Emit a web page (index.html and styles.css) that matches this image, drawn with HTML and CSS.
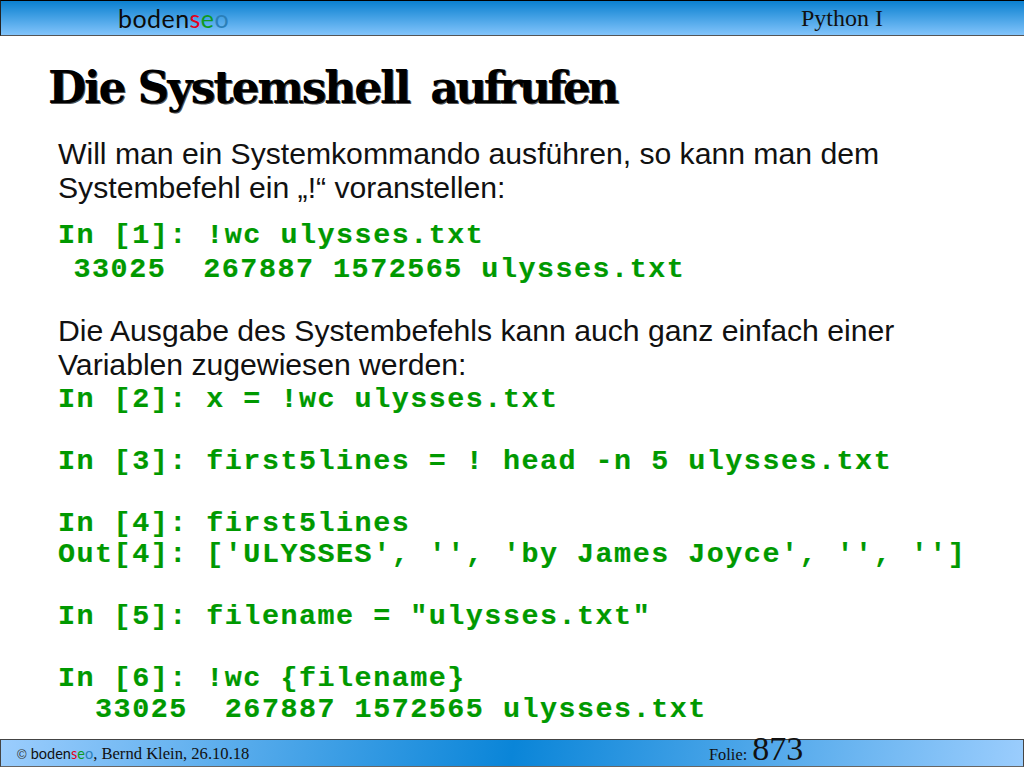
FILE: index.html
```html
<!DOCTYPE html>
<html lang="de">
<head>
<meta charset="utf-8">
<title>Die Systemshell aufrufen</title>
<link rel="stylesheet" href="styles.css">
</head>
<body>
<div class="slide">
  <header class="top">
    <div class="logo">boden<span class="r">s</span><span class="g">e</span><span class="b">o</span></div>
    <div class="course">Python I</div>
  </header>
  <main class="content">
    <h1 class="title">Die Systemshell <span class="last">aufrufen</span></h1>
    <p class="text first">Will man ein Systemkommando ausführen, so kann man dem<br>Systembefehl ein „!“ voranstellen:</p>
    <pre class="code one">In [1]: !wc ulysses.txt
<span class="nudge"> 33025  267887 1572565 ulysses.txt</span></pre>
    <p class="text second">Die Ausgabe des Systembefehls kann auch ganz einfach einer<br>Variablen zugewiesen werden:</p>
    <pre class="code two">In [2]: x = !wc ulysses.txt

In [3]: first5lines = ! head -n 5 ulysses.txt

In [4]: first5lines
Out[4]: ['ULYSSES', '', 'by James Joyce', '', '']

In [5]: filename = "ulysses.txt"

In [6]: !wc {filename}
  33025  267887 1572565 ulysses.txt</pre>
  </main>
  <footer class="bottom">
    <div class="credit"><span class="copy">©</span> <span class="mini">boden<span class="r">s</span><span class="g">e</span><span class="b">o</span></span>, Bernd Klein, 26.10.18</div>
    <div class="folio"><span class="folie">Folie:</span> <span class="num">873</span></div>
  </footer>
</div>
</body>
</html>
```
FILE: styles.css
```css
* { box-sizing: border-box; }
html, body { margin: 0; padding: 0; background: #fff; }
.slide { width: 1024px; height: 768px; display: flex; flex-direction: column; overflow: hidden; }
.top {
  height: 36px; flex: none; display: flex; align-items: center; justify-content: space-between;
  border-top: 1px solid #000; border-left: 1px solid #222; border-bottom: 1px solid #555;
  background: linear-gradient(180deg, #0a80d0 0%, #82c4fb 100%);
  padding: 0 141px 0 117px;
}
.logo { font: 400 25px/24px "Lato", sans-serif; color: #0b0b0b; letter-spacing: 0.45px; }
.r { color: #e3001b; }
.g { color: #0f9a1f; }
.b { color: #2a7fb8; }
.course { font: 400 24px/30px "Liberation Serif", serif; color: #111; }
.content { flex: 1; padding: 24px 0 0 48px; }
.title {
  margin: 0; font: 700 44px/56px "DejaVu Serif", serif; letter-spacing: -2.15px; color: #000;
  text-shadow: 1px 1px 0 #555;
}
.last { margin-left: 8px; letter-spacing: -3.5px; }
.text { margin: 0 0 0 10px; font: 400 30.2px/34px "Liberation Sans", sans-serif; letter-spacing: -0.02px; color: #111; }
.first { margin-top: 21px; }
.code { margin: 0; font: 700 28.4px/31px "Liberation Mono", monospace; letter-spacing: 1.5px; color: #009900; -webkit-text-stroke: 0.2px #009900; }
.one { margin: 15px 0 0 10px; }
.nudge { display: block; margin-top: 3px; margin-left: -3px; }
.second { margin-top: 29px; }
.two { margin: 2px 0 0 10px; }
.bottom {
  height: 28px; flex: none; margin-bottom: 1px; display: flex; align-items: center;
  border: 1px solid #444; border-bottom-color: #666;
  background: linear-gradient(100deg, #9bcdfd 0%, #0a85d8 50%, #9bcdfd 100%);
  padding: 0 0 0 16px;
}
.credit { width: 692px; font: 400 16.6px/24px "Liberation Serif", serif; color: #111; margin-top: 2px; }
.copy { font-family: "Liberation Sans", sans-serif; font-size: 13px; color: #333; }
.mini { font: 400 14.5px "Lato", sans-serif; }
.folio { display: flex; align-items: baseline; gap: 5px; color: #111; margin-top: -2px; }
.folie { font: 400 16.4px/24px "Liberation Serif", serif; }
.num { font: 400 34px/24px "Liberation Serif", serif; }
```
